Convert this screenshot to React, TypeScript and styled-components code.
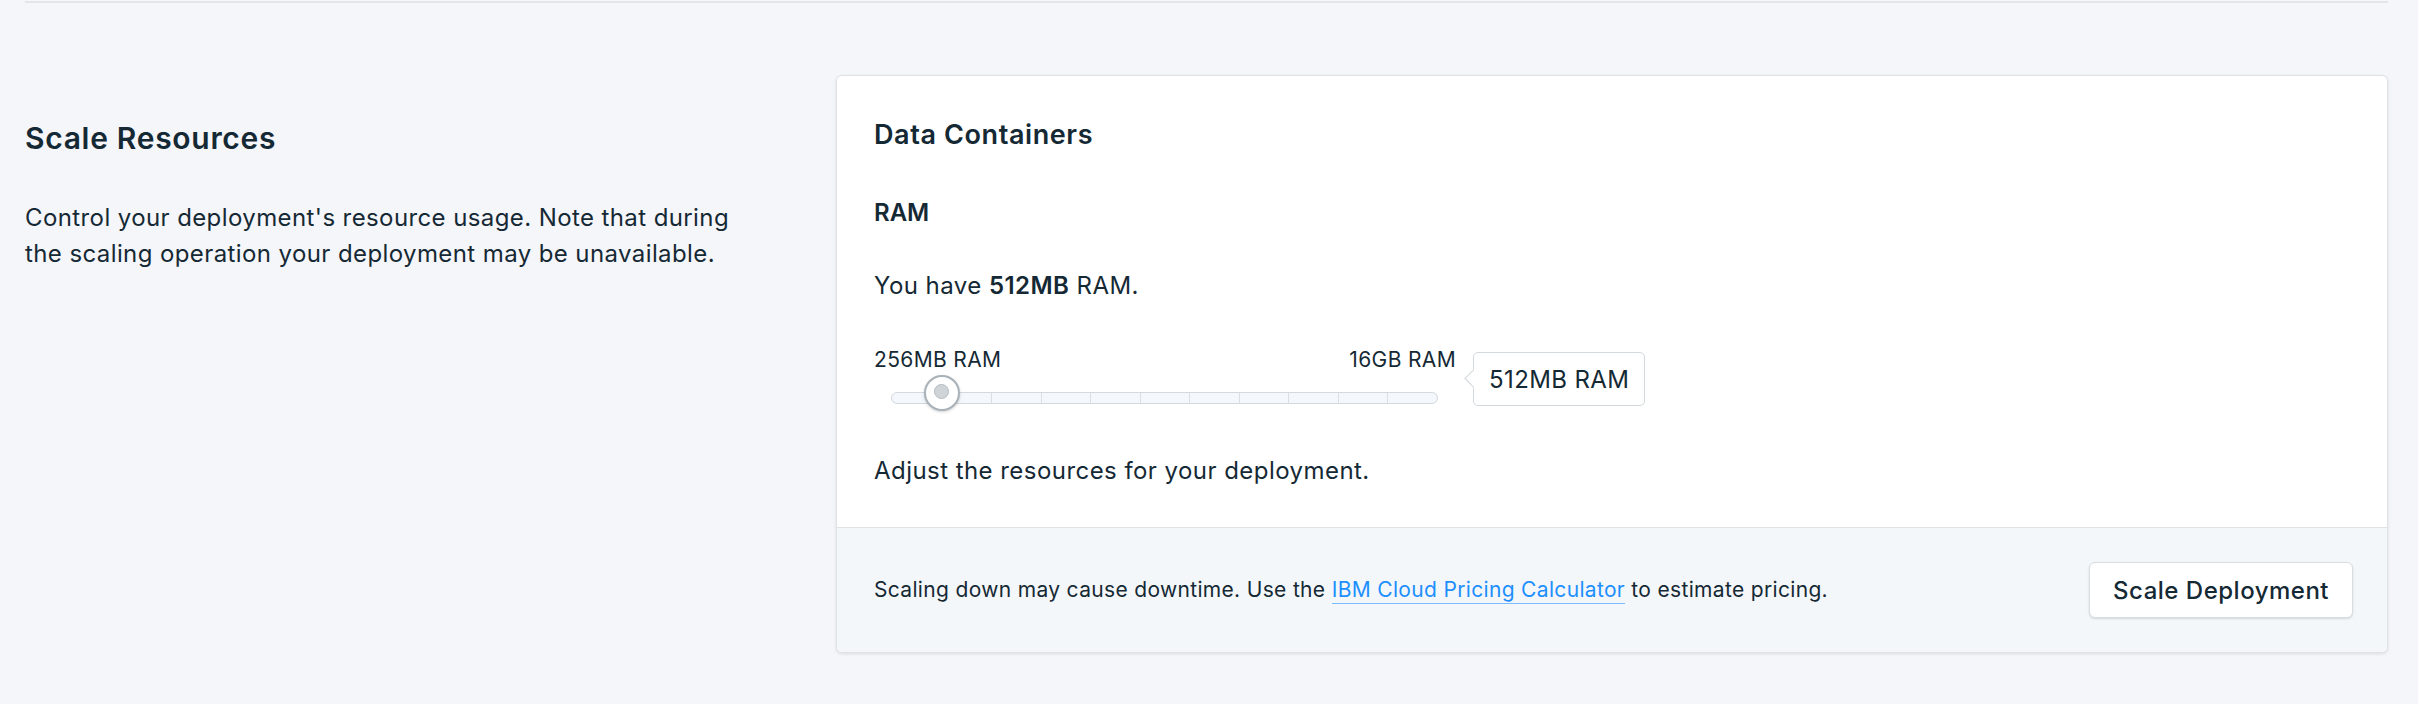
import React from "react";
import styled, { createGlobalStyle } from "styled-components";

const GlobalStyle = createGlobalStyle`
  html, body {
    margin: 0;
    padding: 0;
    background: #f5f6fa;
  }
  body {
    font-family: Inter, "Noto Sans", "Liberation Sans", sans-serif;
    color: #152935;
    -webkit-font-smoothing: antialiased;
  }
  * { box-sizing: border-box; }
`;

const Page = styled.div`
  padding: 1px 30px 40px 25px;
`;

const Divider = styled.div`
  height: 2px;
  background: #e2e5ea;
`;

const Section = styled.section`
  display: grid;
  grid-template-columns: 787px 1fr;
  column-gap: 24px;
  margin-top: 72px;
  align-items: start;
`;

const Intro = styled.div`
  padding-top: 43px;
`;

const SectionTitle = styled.h2`
  margin: 0;
  font-size: 30px;
  line-height: 40px;
  font-weight: 600;
  letter-spacing: 0.7px;
`;

const SectionText = styled.p`
  margin: 42px 0 0;
  max-width: 730px;
  font-size: 24px;
  line-height: 36px;
  font-weight: 400;
  letter-spacing: 0.4px;
`;

const Card = styled.div`
  background: #ffffff;
  border: 1px solid #dfe3e6;
  border-radius: 6px;
  box-shadow: 0 1px 3px rgba(21, 41, 53, 0.12);
  overflow: hidden;
`;

const CardBody = styled.div`
  padding: 41px 37px 38px 37px;
  display: flex;
  flex-direction: column;
`;

const CardTitle = styled.h3`
  margin: 0;
  font-size: 27px;
  line-height: 36px;
  font-weight: 600;
  letter-spacing: 0.6px;
`;

const FieldLabel = styled.h4`
  margin: 42px 0 0;
  font-size: 24px;
  line-height: 36px;
  font-weight: 600;
`;

const BodyText = styled.p<{ $gap: number }>`
  margin: ${(p) => p.$gap}px 0 0;
  font-size: 24px;
  line-height: 36px;
  font-weight: 400;
  letter-spacing: 0.45px;

  strong {
    font-weight: 600;
  }
`;

const SliderRow = styled.div`
  margin-top: 42px;
  display: flex;
  align-items: flex-start;
`;

const Slider = styled.div`
  width: 582px;
  display: flex;
  flex-direction: column;
`;

const RangeLabels = styled.div`
  display: flex;
  justify-content: space-between;
  font-size: 21px;
  line-height: 28px;
  letter-spacing: 0.35px;
`;

const Track = styled.div`
  position: relative;
  margin: 18px 18px 0 17px;
  height: 12px;
  border: 1px solid #d3d9de;
  border-radius: 6px;
  background: #f4f7fb;
`;

const Tick = styled.span`
  position: absolute;
  top: 0;
  bottom: 0;
  width: 1px;
  background: #dadfe3;
`;

const Thumb = styled.div`
  position: absolute;
  top: -18px;
  width: 36px;
  height: 36px;
  margin-left: -18px;
  border-radius: 50%;
  background: #ffffff;
  border: 2px solid #a9b2b8;
  box-shadow: 0 1px 3px rgba(0, 0, 0, 0.18);
  display: flex;
  align-items: center;
  justify-content: center;

  &::after {
    content: "";
    width: 13px;
    height: 13px;
    margin-top: -3px;
    border-radius: 50%;
    background: #cfd4d8;
    border: 1px solid #b4bcc2;
  }
`;

const ValueBubble = styled.div`
  position: relative;
  margin: 6px 0 0 17px;
  height: 54px;
  padding: 0 15px;
  display: flex;
  align-items: center;
  background: #ffffff;
  border: 1.5px solid #d2d8dc;
  border-radius: 5px;
  font-size: 24px;
  letter-spacing: 0.4px;

  &::before {
    content: "";
    position: absolute;
    left: -7.5px;
    top: 50%;
    width: 12px;
    height: 12px;
    margin-top: -7px;
    background: #ffffff;
    border-left: 1.5px solid #d2d8dc;
    border-bottom: 1.5px solid #d2d8dc;
    transform: rotate(45deg);
  }
`;

const CardFooter = styled.div`
  display: flex;
  align-items: center;
  justify-content: space-between;
  padding: 34px 34px 34px 37px;
  background: #f4f7f9;
  border-top: 1px solid #dfe3e6;
`;

const FooterText = styled.p`
  margin: 0;
  font-size: 21px;
  line-height: 28px;
  letter-spacing: 0.33px;
`;

const Link = styled.a`
  color: #1d8fff;
  text-decoration: none;
  border-bottom: 1px solid #7bbcff;
  padding-bottom: 1px;
`;

const Button = styled.button`
  height: 56px;
  padding: 0 23px;
  font-family: inherit;
  font-size: 24px;
  font-weight: 500;
  letter-spacing: 0.5px;
  color: #152935;
  background: #ffffff;
  border: 1px solid #d8dde1;
  border-radius: 6px;
  box-shadow: 0 1px 2px rgba(21, 41, 53, 0.15);
  cursor: pointer;
`;

const SEGMENTS = 11;
const STOP = 1;

export default function App() {
  const ticks = Array.from({ length: SEGMENTS - 1 }, (_, i) => i + 1);
  return (
    <>
      <GlobalStyle />
      <Page>
        <Divider />
        <Section>
          <Intro>
            <SectionTitle>Scale Resources</SectionTitle>
            <SectionText>
              Control your deployment's resource usage. Note that during the scaling
              operation your deployment may be unavailable.
            </SectionText>
          </Intro>
          <Card>
            <CardBody>
              <CardTitle>Data Containers</CardTitle>
              <FieldLabel>RAM</FieldLabel>
              <BodyText $gap={37}>
                You have <strong>512MB</strong> RAM.
              </BodyText>
              <SliderRow>
                <Slider>
                  <RangeLabels>
                    <span>256MB RAM</span>
                    <span>16GB RAM</span>
                  </RangeLabels>
                  <Track>
                    {ticks.map((t) => (
                      <Tick key={t} style={{ left: `${(t / SEGMENTS) * 100}%` }} />
                    ))}
                    <Thumb style={{ left: `${(STOP / SEGMENTS) * 100}%` }} />
                  </Track>
                </Slider>
                <ValueBubble>512MB RAM</ValueBubble>
              </SliderRow>
              <BodyText $gap={47}>Adjust the resources for your deployment.</BodyText>
            </CardBody>
            <CardFooter>
              <FooterText>
                Scaling down may cause downtime. Use the{" "}
                <Link href="#">IBM Cloud Pricing Calculator</Link> to estimate pricing.
              </FooterText>
              <Button>Scale Deployment</Button>
            </CardFooter>
          </Card>
        </Section>
      </Page>
    </>
  );
}
